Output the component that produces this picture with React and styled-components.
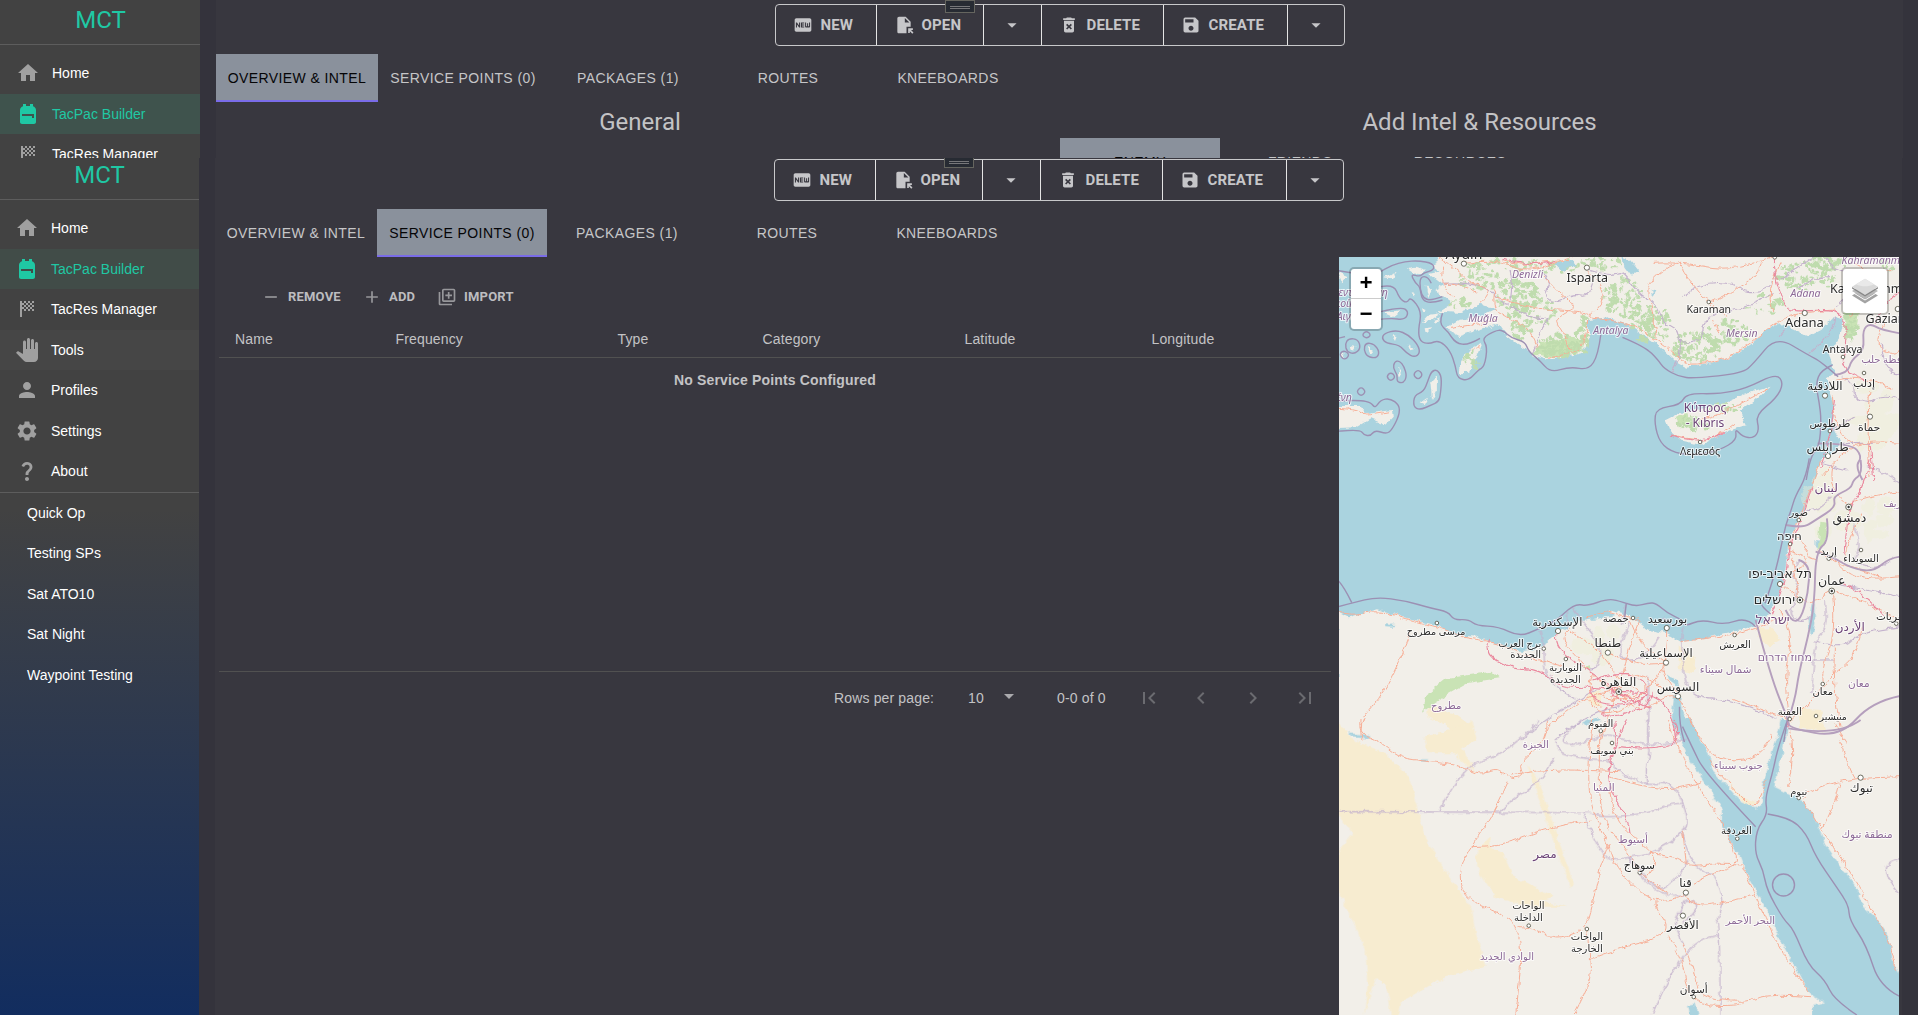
import React from "react";
import styled, { createGlobalStyle } from "styled-components";
import {
  MdHome, MdBackpack, MdSportsScore, MdPanTool, MdPerson, MdSettings, MdQuestionMark,
  MdFiberNew, MdFileOpen, MdArrowDropDown, MdDeleteForever, MdSave, MdRemove, MdAdd,
  MdOutlineLibraryAdd, MdFirstPage, MdChevronLeft, MdChevronRight, MdLastPage,
} from "react-icons/md";

const Global = createGlobalStyle`
  *, *::before, *::after { box-sizing: border-box; }
  html, body { margin: 0; padding: 0; background: #34333c; overflow: hidden; }
  body { font-family: "Liberation Sans", Arial, sans-serif; font-size: 14px; color: #c3c3c5; }
`;

const Page = styled.div`
  display: flex;
  flex-direction: column;
  height: 1015px;
  overflow: hidden;
`;

const Frame = styled.section`
  flex: ${(p) => (p.$height ? `0 0 ${p.$height}px` : "1 1 0")};
  min-height: 0;
  overflow: hidden;
`;

const Shell = styled.div`
  display: flex;
  gap: 16px;
  width: 1918px;
  height: ${(p) => p.$height}px;
  margin: ${(p) => (p.$nudged ? "-3px 0 0 -1px" : "0")};
`;

const Sidebar = styled.nav`
  flex: 0 0 200px;
  background: ${(p) => (p.$fade ? "linear-gradient(#424242 0, #424242 355px, #122d5f 100%)" : "#424242")};
`;

const Brand = styled.h1`
  margin: 0;
  height: 45px;
  padding: 6px 0 0 1px;
  border-bottom: 1px solid #5d5d5d;
  text-align: center;
  font: 400 24px/28px Roboto, sans-serif;
  color: #1fc8a4;
`;

const NavList = styled.ul`
  list-style: none;
  margin: 0;
  padding: ${(p) => (p.$top ? "8px 0 0" : "0")};
  border-bottom: ${(p) => (p.$ruled ? "1px solid #5d5d5d" : "0")};
`;

const NavItem = styled.li`
  display: flex;
  align-items: center;
  gap: 12px;
  height: 40.5px;
  padding: 0 16px 0 ${(p) => (p.$plain ? 28 : 16)}px;
  font-size: 14px;
  line-height: 20px;
  color: ${(p) => (p.$tone ? "#1fc8a4" : "#fff")};
  background: ${(p) => (p.$tone === "hover" ? "#3f534d" : p.$tone ? "#414c48" : p.$raised ? "#464646" : "transparent")};
  svg { width: 24px; height: 24px; flex: none; color: ${(p) => (p.$tone ? "#1fc8a4" : "#a0a0a0")}; }
`;

const Panel = styled.main`
  flex: 0 0 1687px;
  display: flex;
  flex-direction: column;
  background: #38373f;
`;

const ActionBar = styled.div`
  display: flex;
  justify-content: center;
  padding: 4px 0 8px;
`;

const ButtonGroup = styled.div`
  display: flex;
  width: 570px;
  height: 42px;
  border: 1px solid #c8c8ca;
  border-radius: 4px;
  position: relative;
`;

const GroupButton = styled.button`
  flex: 0 0 ${(p) => p.$width}px;
  display: flex;
  align-items: center;
  justify-content: ${(p) => (p.$caret ? "center" : "flex-start")};
  gap: 8px;
  padding: 0 0 ${(p) => (p.$caret ? "0 0" : "1px 17px")};
  border: 0;
  border-right: ${(p) => (p.$last ? "0" : "1px solid #e4e4e4")};
  background: none;
  color: #c6c6c9;
  font: 700 15px/26px Roboto, sans-serif;
  letter-spacing: 0.15px;
  white-space: nowrap;
  svg { width: ${(p) => (p.$caret ? 22 : 20)}px; height: ${(p) => (p.$caret ? 22 : 20)}px; flex: none; }
`;

const Grip = styled.div`
  position: absolute;
  left: 169px;
  top: -5px;
  width: 30px;
  height: 13px;
  padding: 5px 4px 0;
  background: #272b33;
  border: 1px solid #65655f;
  &::before {
    content: "";
    display: block;
    height: 3px;
    border: solid #77777a;
    border-width: 1px 0;
  }
`;

const TabBar = styled.div`
  display: flex;
  height: 48px;
`;

const Tab = styled.button`
  flex: 0 0 ${(p) => p.$width || 160}px;
  padding: ${(p) => (p.$active ? "2px 0 0" : "0")};
  height: 48px;
  border: 0;
  border-bottom: ${(p) => (p.$active ? "2px solid #7a6ce8" : "0")};
  background: ${(p) => (p.$active ? "#8a919c" : "transparent")};
  color: ${(p) => (p.$active ? "#050507" : "#c6c6c8")};
  font: 400 14px/24px "Liberation Sans", Arial, sans-serif;
  letter-spacing: 0.4px;
  white-space: nowrap;
`;

const Columns = styled.div`
  display: flex;
  justify-content: space-between;
`;

const HalfPane = styled.div`
  flex: 0 0 ${(p) => p.$width}px;
  display: flex;
  flex-direction: column;
`;

const PaneTitle = styled.h2`
  margin: 0;
  height: 36px;
  padding: 4px ${(p) => p.$right || 0}px 0 ${(p) => p.$left || 0}px;
  text-align: center;
  font: 400 24px/32px Roboto, sans-serif;
  color: #c3c3c5;
`;

const Workspace = styled.div`
  flex: 1;
  display: flex;
  gap: 8px;
  padding: 0 3px 0 4px;
`;

const TableArea = styled.div`
  flex: 0 0 1112px;
  display: flex;
  flex-direction: column;
`;

const TableActions = styled.div`
  display: flex;
  height: 62px;
  padding: 18px 0 0 42px;
  align-items: center;
`;

const TextButton = styled.button`
  flex: 0 0 ${(p) => p.$width}px;
  display: flex;
  align-items: center;
  gap: 7px;
  padding: 0;
  border: 0;
  background: none;
  color: #bdbdc0;
  font: 700 13px/22px Roboto, sans-serif;
  letter-spacing: 0.2px;
  svg { width: 20px; height: 20px; color: #97979b; }
`;

const HeadRow = styled.div`
  display: grid;
  grid-template-columns: 160.5px 222px 145px 202px 187px 1fr;
  height: 39px;
  padding: 11px 0 0 16px;
  border-bottom: 1px solid #515151;
  line-height: 18px;
  letter-spacing: 0.15px;
`;

const EmptyBody = styled.div`
  height: 314px;
  padding-top: 12px;
  border-bottom: 1px solid #515151;
  text-align: center;
  font-weight: 700;
  line-height: 20px;
  letter-spacing: 0.15px;
`;

const Pager = styled.div`
  display: flex;
  align-items: center;
  justify-content: flex-end;
  height: 52px;
  letter-spacing: 0.15px;
`;

const PagerText = styled.span`
  flex: 0 0 ${(p) => p.$width}px;
  white-space: nowrap;
`;

const PagerCaret = styled.span`
  flex: 0 0 60px;
  height: 28px;
  color: #aaaaad;
  svg { display: block; width: 24px; height: 24px; }
`;

const PagerStep = styled.span`
  flex: 0 0 52px;
  display: flex;
  justify-content: center;
  color: #6b6b70;
  svg { width: 24px; height: 24px; }
`;

const MapBox = styled.div`
  flex: 0 0 560px;
  height: 758px;
  position: relative;
  overflow: hidden;
  background: #aad3df;
`;

const MapCanvas = styled.svg`
  display: block;
  width: 560px;
  height: 758px;
`;

const MapControl = styled.div`
  position: absolute;
  top: 10px;
  ${(p) => p.$side}: 10px;
  display: flex;
  flex-direction: column;
  align-items: center;
  justify-content: center;
  width: ${(p) => p.$width}px;
  border: 2px solid rgba(0, 0, 0, 0.2);
  border-radius: 5px;
  background: #fff;
  background-clip: padding-box;
`;

const ZoomKey = styled.button`
  width: 30px;
  height: 30px;
  padding: 3px 0 0;
  border: 0;
  border-bottom: ${(p) => (p.$ruled ? "1px solid #ccc" : "0")};
  background: none;
  font: bold 22px/26px "Liberation Mono", monospace;
  color: #000;
`;

const LayersKey = styled.div`
  display: flex;
  align-items: center;
  justify-content: center;
  height: 44px;
`;

/* Map sheets: each sheet has its own survey grid and a vertical offset on the canvas. */
const SHEET = { n: -167, c: 203, s: 463 };
const toCanvas = (sheet, x, y) => [x * 0.375 - 9, y / 3 + SHEET[sheet]];

const LAND = {
  n: [
    "285,490 290,515 270,528 292,545 262,552 285,570 302,585 278,600 300,620 325,640 288,665 345,668 400,645 445,655 400,680 345,690 305,715 345,738 400,718 450,702 470,735 510,770 540,795 580,810 640,798 675,788 690,740 690,690 740,682 790,700 840,740 880,770 920,812 950,830 1010,820 1070,800 1120,765 1160,725 1200,700 1240,720 1275,740 1310,720 1345,680 1372,690 1360,740 1330,790 1345,850 1325,865 1330,900 1345,950 1340,1010 1365,1060 1330,1100 1305,1140 1300,1172 1525,1172 1525,490",
    "895,990 930,970 1040,945 1100,915 1175,890 1130,935 1095,965 1112,1005 1070,1020 1030,1042 990,1065 940,1052 905,1020",
    "407,758 375,775 350,810 343,850 370,848 392,800",
    "20,948 80,948 98,972 150,962 168,960 170,980 150,1004 110,985 70,1012 20,1014",
    "285,855 268,880 272,930 285,900", "238,940 262,920 250,945",
    "205,535 230,530 256,540 235,556", "140,565 178,548 165,568", "20,550 45,562 30,580",
    "145,670 190,664 170,682", "245,695 262,675 295,670 270,690", "275,690 294,682 280,702", "255,715 275,712 258,730",
    "168,735 180,738 176,750", "210,760 226,775 216,778", "54,765 68,768 60,782", "100,770 115,780 108,790",
    "182,830 192,850 186,860", "255,582 270,600 262,622", "30,785 40,800 32,805", "215,610 226,612 220,622", "245,655 258,660 250,670",
  ],
  c: [
    "20,455 50,472 125,448 200,472 290,498 330,525 390,530 440,550 500,572 540,570 580,545 612,515 660,482 700,475 750,452 800,470 850,500 900,520 935,545 1000,536 1050,520 1110,508 1150,490 1190,430 1205,380 1215,320 1222,250 1240,200 1265,150 1285,80 1300,30 1312,-6 1525,-6 1525,846 20,846",
  ],
};

const SAND = {
  c: ["20,800 60,845 20,845", "1140,505 1180,500 1200,540 1170,560 1140,530", "1250,745 1310,750 1320,815 1250,805", "930,560 975,590 970,640 930,630",
    "260,735 330,760 380,800 390,840 290,840 320,800 260,770", "690,700 720,690 725,740 690,730"],
  s: ["20,0 60,60 150,100 210,170 235,275 255,355 290,420 320,470 380,570 385,620 415,740 300,775 190,845 180,885 165,885 150,800 125,770 100,850 90,885 100,800 95,690 60,600 20,510 20,400 60,340 20,280",
    "250,50 330,30 380,0 390,60 350,85 390,160 330,100 260,100", "525,130 560,190 600,330 650,490 640,505 570,280",
    "385,410 425,350 430,385 460,400 490,470 600,530 560,540 630,560 530,560 440,530 400,460", "1050,170 1100,230 1140,250 1110,260"],
};

const WATER = {
  n: ["780,500 800,510 825,545 805,560 785,530", "858,600 868,605 862,618", "600,520 650,512 655,530 640,528 625,545 612,535"],
  c: ["918,705 912,760 920,800 940,846 985,846 955,790 938,750 934,705", "900,640 925,660 930,680 905,660", "1217,785 1198,815 1193,846 1212,846 1222,800",
    "1285,425 1277,480 1279,530 1286,520 1293,480 1292,430", "690,470 740,455 760,465 700,480", "830,490 880,500 900,520 850,510", "500,560 550,545 560,560 510,572", "1295,240 1303,242 1301,265 1295,260",
    "150,493 175,495 170,500 150,499", "675,790 715,775 720,785 690,798"],
  s: ["916,-4 962,-4 985,60 1010,100 1020,150 1060,200 1100,250 1135,265 1155,250 1155,200 1170,130 1195,40 1205,-4 1222,-4 1215,50 1200,130 1185,200 1220,220 1260,240 1290,290 1320,370 1350,420 1400,500 1430,570 1460,600 1490,650 1500,720 1522,765 1522,890 1285,890 1285,858 1320,850 1280,822 1240,740 1200,660 1170,580 1140,520 1110,460 1090,400 1070,370 1045,320 1045,270 1010,200 960,120 935,60",
    "955,855 975,850 985,890 960,890", "240,118 262,118 258,125 242,124", "50,40 105,45 100,55 60,52", "680,0 715,0 700,12"],
};

const WOODS = {
  n: ["560,760 640,740 680,745 670,785 600,805 540,790", "1378,650 1412,660 1400,740 1375,750", "922,980 950,972 965,1010 930,1000"],
  c: ["260,700 310,655 430,635 450,655 370,668 320,700 270,735 245,755", "1305,185 1328,190 1322,250 1300,270", "672,625 690,615 692,630"],
};

const ROADS = {
  n: [
    "290,500 340,540 370,580 440,600 400,640", "300,530 290,590 330,620", "360,520 440,505 520,545 600,520 650,500", "460,510 520,530 580,510 640,515",
    "440,620 520,650 600,660 690,665 700,685", "685,540 720,580 735,640 690,680", "700,685 780,690 860,740 930,800 950,828 1050,810 1110,770 1200,690 1260,665 1350,660",
    "860,520 930,515 1050,540 1130,520 1190,500", "930,515 880,545 845,590 860,660 870,740", "930,520 960,580 1010,640 1060,680", "1010,640 1080,600 1140,560 1150,520",
    "1020,690 1040,730", "640,780 630,740 605,700 610,680 660,650 600,600 570,560", "440,600 430,650 470,680 540,720 550,770", "1400,520 1450,560 1500,540", "1430,560 1420,650 1380,680",
    "1480,700 1450,760 1500,800 1520,780", "1350,870 1420,850 1500,900", "1340,920 1345,1040 1400,1060", "1440,900 1430,990 1440,1160", "1310,1160 1370,1080 1440,1050 1520,1060",
    "915,1035 990,1058 1040,1035 1080,1000", "985,990 1040,975 1100,935 1170,895", "24,955 70,958 90,975 110,975 160,965", "375,780 400,770",
    "1180,660 1160,600 1200,520", "305,580 350,575 390,610", "320,715 400,702 445,690", "580,805 640,792 680,770 690,690",
  ],
  c: [
    "20,455 60,468 125,450 200,475 300,505 360,535 440,545 500,575", "215,520 180,620 130,720 75,790 85,840",
    "640,515 690,545 740,600 770,660", "740,455 800,480 830,470 810,520 790,600 780,650", "680,475 740,452", "740,580 820,620 890,610", "800,480 820,540 860,580 895,608",
    "898,510 896,600 880,640 925,700", "640,500 610,530 660,590 700,650 760,690", "770,690 700,700 620,760 580,800 570,840", "770,690 740,770 722,840", "770,690 800,740 850,745 900,700 928,710",
    "690,720 710,765 790,750 850,690 830,660", "700,640 680,700 720,740", "500,580 620,620", "935,545 1080,525 1150,500 1210,470", "928,710 960,770 985,840", "1075,715 1150,750 1220,775",
    "1205,375 1250,420 1290,430 1340,390", "1222,255 1240,320 1250,420", "1200,450 1240,520 1210,650 1225,775", "1340,395 1350,520 1310,620 1315,670", "1350,300 1380,370 1520,350",
    "1335,390 1420,420 1520,480", "1300,270 1340,300 1380,320 1470,350", "1385,130 1420,110 1520,95", "1310,0 1280,90 1250,180 1225,250", "1340,20 1330,100 1385,135", "1420,160 1380,240 1370,300",
    "1345,560 1340,680 1360,800", "1420,500 1400,600 1340,640 1290,720 1230,780", "1240,230 1280,250 1260,290 1300,300", "1225,270 1260,280 1280,320 1210,345",
    "900,610 870,650 840,700 810,720 770,700", "780,640 860,640 890,690", "740,690 790,670 830,690 800,720 750,710", "720,700 760,740 800,700",
  ],
  s: [
    "80,0 75,40 130,60 180,110 240,122 345,135 400,165 450,145 480,180 520,170 500,130 580,60 580,0", "475,185 440,275 400,340 375,385 350,430 345,510 400,560 460,580 500,620 513,720 495,885",
    "375,380 460,380 580,320 700,300", "500,620 530,618 600,660 680,630 700,560 720,430 745,370", "685,630 692,700 697,790 650,885", "690,720 780,680 880,655 900,610 865,560 870,540",
    "700,0 690,100 690,250 740,370 760,440 830,525 900,550 950,520", "720,30 715,200 730,310 800,400 820,460 900,520", "745,200 750,290 830,370 860,400 870,440 840,480", "850,400 920,410 960,440 1010,430 1100,435",
    "770,155 680,150 550,150 480,165", "745,170 830,200 930,210 990,185", "950,520 960,560 1050,550 1130,525", "970,490 1040,450 1095,430 1060,350 1045,300 980,200 930,90 900,0",
    "1100,440 1150,570 1200,690 1280,820", "940,670 970,740 980,830 1110,850 1170,820 1280,830", "905,650 940,720 960,850 1070,860 1100,850",
    "1225,30 1245,90 1220,200", "960,0 1000,100 1080,130 1160,100 1180,40", "1010,120 1110,250 1140,265 1165,180", "1415,175 1300,190 1260,230", "1360,190 1350,250 1310,330", "1415,175 1520,170",
    "1360,60 1385,150 1400,175", "1345,10 1380,70", "1260,240 1310,330 1380,440 1440,560 1500,680 1510,750", "950,430 940,330",
  ],
};

const MOTORWAYS = {
  n: ["460,505 520,530 600,515", "1185,500 1185,560 1205,620 1220,665 1300,660 1365,665 1380,740 1360,850 1430,870", "1440,1060 1450,1170", "1345,930 1340,1030 1310,1130", "1520,600 1480,640 1450,700", "912,1035 950,1050 1010,1050 1050,1030"],
  c: ["425,540 412,578 480,625 560,628 620,685 700,680 770,695 850,745", "605,525 600,550 640,600 770,690", "700,660 770,630 840,660 850,720 770,740 690,720 700,680", "770,695 870,692 920,780 925,840",
    "1285,80 1260,180 1225,250 1212,380 1180,460", "1440,0 1420,90 1385,135 1375,240 1370,280", "1370,370 1430,405 1480,470", "745,680 760,730 820,720 840,690", "740,740 720,765 760,770 850,740 860,700", "1222,775 1225,805"],
  s: ["790,0 740,140 745,200 800,310 800,340", "770,80 860,90 940,60 920,0", "760,0 765,100 745,120", "1222,0 1222,25"],
};

const BORDERS = {
  n: [
    "300,580 360,575 430,600 450,630 480,650 490,590 480,540", "480,650 550,690 590,680 560,720 540,790", "560,540 590,570 570,620 600,640 650,610 690,620 700,580", "690,540 750,560 780,540 820,610 870,640 890,700 930,720 925,760 1000,750 990,690 1060,650",
    "940,620 990,575 1080,580 1110,610 1180,595 1190,540", "1060,665 1130,650 1180,610", "1200,570 1290,500", "1320,500 1340,540 1420,550 1390,610 1350,650", "1330,560 1290,560 1240,600",
    "935,750 935,810 912,846", "1370,860 1400,890 1395,920 1440,940 1480,910 1520,930", "1400,980 1340,1020", "1470,760 1480,860 1520,850", "1365,1060 1450,1060", "1310,1120 1380,1140", "1345,680 1348,725 1275,795", "1215,715 1195,740",
  ],
  c: [
    "560,515 572,560 572,665 655,718", "630,450 632,500", "650,445 680,495 720,550 720,630 690,630", "790,430 780,490", "940,500 935,600 960,715 1080,720 1190,775", "890,470 910,500", "800,480 780,530 770,600 830,600 870,550 880,530",
    "850,650 850,846", "510,840 570,775 710,690", "600,840 700,750 770,740", "1320,420 1330,500 1290,540 1285,700", "1290,545 1370,565 1400,520 1520,500", "1290,600 1345,600", "1395,190 1420,250 1390,310 1480,330 1500,290",
    "1250,300 1230,340 1255,400 1220,460 1260,490 1280,470", "1270,150 1300,160 1340,110", "1430,20 1470,30 1520,70", "1340,370 1520,410",
  ],
  s: [
    "20,275 700,276 700,285 740,292 850,280 910,250 942,250", "560,0 465,108 350,136 293,275", "670,0 603,66 655,78 740,40 770,55 860,82 955,58", "603,66 597,115 745,120", "597,115 570,180 480,240 453,275",
    "745,122 780,170 850,192 900,188 930,215 945,260 955,310 940,335 885,390 790,415 725,424 677,280", "848,0 845,80 857,90 838,155 850,192", "940,335 958,420 1010,465 1025,460 1050,540 1030,600 1040,615 1040,885", "958,420 900,510 860,500 800,410 790,415 880,535 950,525",
    "950,540 980,545 975,580 940,610", "1040,643 945,643 860,885", "950,540 915,600 930,640 945,680", "1520,415 1500,420 1480,440 1490,480 1520,520",
  ],
};

const NATIONAL = {
  n: ["1520,730 1470,720 1440,700 1420,720 1425,780 1390,810 1380,850 1345,855", "1300,1060 1390,1060 1420,1100 1400,1130 1420,1170"],
  c: ["1415,0 1420,40 1395,60 1390,85 1340,110 1350,140 1295,180 1260,205 1215,195", "1325,175 1332,240 1295,275 1292,430 1275,530 1250,640 1240,720 1222,780", "1135,480 1175,650 1222,780 1225,805 1360,832 1445,725 1520,708", "1295,275 1340,290 1390,325 1450,335 1490,295 1520,290", "1250,300 1280,310 1275,400 1255,480 1230,485 1215,450"],
  s: ["1222,25 1355,50 1415,0"],
};

const SEA_LIMITS = {
  n: [
    "-10,535 60,550 110,555 130,548 165,525 200,515 235,512 275,520 278,540 250,548 240,560 215,552 228,580 240,590 245,630 270,640 300,630",
    "135,590 170,582 185,625 205,640 215,620 245,665 235,720 240,755 265,762 290,750 320,780 335,830 340,865 370,872 395,840 412,830 420,770 405,745 440,722 460,720 485,745 520,755 530,785 560,812 588,848 640,830 690,840 715,795 722,735",
    "780,742 840,770 875,810 890,835 930,860 970,865 1100,850 1130,820 1190,738 1275,795 1310,815 1355,860",
    "270,580 262,560 240,560 240,600 250,625 270,632 300,620", "300,670 290,700 315,725 335,760 370,765 400,745", "120,690 160,684 200,690 210,665 190,650 135,665",
    "1340,825 1310,840 1295,880 1305,940 1310,990 1305,1070 1280,1100 1270,1170",
    "40,740 10,750 -10,745",
  ],
  c: [
    "20,360 35,375 58,428", "-10,450 60,428 125,411 200,422 270,445 315,455 330,480 370,478 390,497 450,500 505,530 555,508 605,480 635,448 660,432 685,438 740,417 770,422 815,440 850,428 870,430 900,460 940,480 945,500 990,478 1050,495 1112,472 1135,500",
    "1278,-5 1270,50 1240,110 1230,150 1215,195 1205,250 1185,350 1160,430", "1150,430 1150,440 1175,462", "790,430 785,480", "932,740 930,790 945,846", "1218,790 1210,846",
  ],
  s: ["940,20 965,80 1000,160 1135,320", "1220,0 1195,80 1180,160 1160,235 1167,282 1137,330 1133,400 1155,450 1165,510 1210,600 1235,625 1275,735 1320,780 1345,840 1405,885", "1167,282 1225,292 1270,340 1295,410 1350,500 1383,555 1385,600 1430,675 1468,805 1530,835"],
};

const SEA_RINGS = {
  n: [
    "935,945 950,910 1040,912 1110,895 1190,850 1210,880 1190,925 1135,975 1145,1020 1130,1045 1100,1040 1080,1015 1085,1050 1040,1080 980,1095 920,1090 880,1060 865,1000 870,955",
    "-20,935 80,930 110,938 120,955 135,930 160,925 185,945 185,975 165,1020 150,1032 120,1020 108,1038 90,1035 80,1018 -20,1028",
    "285,838 298,860 295,910 290,935 270,945 240,960 222,950 225,915 250,905 262,870 270,845", "185,812 198,830 205,860 195,880 178,875 180,855 168,835 172,815",
    "145,730 178,720 210,735 235,765 240,790 225,802 205,790 185,765 150,760 138,745", "95,758 118,762 132,785 125,805 100,800 90,780", "50,745 75,748 82,775 65,792 45,785 40,762",
    "150,860 162,846 175,860 162,874", "221,854 235,838 248,854 235,870", "70,905 83,890 96,905 83,919", "24,793 38,780 53,795 38,811", "85,735 97,722 110,735 97,746",
  ],
};

const LABELS = [
  ["n", 357, 506, "Aydın", 14, "city"], ["n", 686, 577, "Isparta", 12.5, "city"], ["n", 527, 563, "Denizli", 10.5, "area"], ["n", 408, 695, "Muğla", 10.5, "area"],
  ["n", 749, 732, "Antalya", 10.5, "area"], ["n", 1010, 669, "Karaman", 10.5, "city"], ["n", 1098, 740, "Mersin", 10.5, "area"], ["n", 1268, 620, "Adana", 10.5, "area"],
  ["n", 1265, 711, "Adana", 13, "city"], ["n", 1450, 522, "Kahramanma", 10.5, "area"], ["n", 1430, 609, "Kahramanm", 12.5, "city"], ["n", 1497, 699, "Gaziante", 12.5, "city"],
  ["n", 1367, 790, "Antakya", 10.5, "city"], ["n", 1490, 820, "محافظة حلب", 10, "area"], ["n", 1320, 900, "اللاذقية", 12, "city"], ["n", 1424, 892, "إدلب", 11, "city"],
  ["n", 1333, 1010, "طرطوس", 10.5, "city"], ["n", 1438, 1022, "حماة", 11, "city"], ["n", 1327, 1082, "طرابلس", 12, "city"], ["n", 1000, 967, "Κύπρος", 12, "land"],
  ["n", 1000, 1012, "- Kıbrıs", 12, "land"], ["n", 987, 1094, "Λεμεσός", 10.5, "city"], ["n", 58, 618, "Αποκεντρωμένη", 10.5, "area"], ["n", 58, 652, "Διοίκηση", 10.5, "area"],
  ["n", 64, 690, "Αιγαίου", 10.5, "area"], ["n", -38, 934, "Αποκεντρωμένη", 10.5, "area"],
  ["c", 1323, 95, "لبنان", 12, "land"], ["c", 1385, 187, "دمشق", 12.5, "city"], ["c", 1250, 167, "صور", 10, "city"], ["c", 1225, 240, "חיפה", 11.5, "city"],
  ["c", 1330, 285, "إربد", 10.5, "city"], ["c", 1416, 305, "السويداء", 10, "city"], ["c", 1500, 140, "ريف", 10, "area"], ["c", 1200, 355, "תל אביב-יפו", 12.8, "city"],
  ["c", 1338, 375, "عمان", 12.5, "city"], ["c", 1185, 431, "ירושלים", 12.8, "city"], ["c", 1180, 492, "ישראל", 12.5, "land"], ["c", 1386, 512, "الأردن", 12, "land"],
  ["c", 1500, 480, "القريات", 10.5, "city"], ["c", 1213, 602, "מחוז הדרום", 11, "area"], ["c", 1080, 564, "العريش", 10, "city"], ["c", 1055, 640, "شمال سيناء", 10.5, "area"],
  ["c", 1410, 681, "معان", 10.5, "area"], ["c", 1314, 706, "معان", 10, "city"], ["c", 1226, 765, "العقبة", 10, "city"], ["c", 1342, 780, "منيشير", 9.5, "city"],
  ["c", 283, 526, "مرسى مطروح", 9.7, "city"], ["c", 310, 747, "مطروح", 10, "area"], ["c", 606, 498, "الإسكندرية", 11.5, "city"], ["c", 506, 560, "برج العرب", 10, "city"],
  ["c", 522, 595, "الجديدة", 10, "city"], ["c", 762, 487, "جمصة", 10, "city"], ["c", 900, 488, "بورسعيد", 11.5, "city"], ["c", 741, 562, "طنطا", 12, "city"],
  ["c", 628, 634, "النوبارية", 10, "city"], ["c", 628, 668, "الجديدة", 10, "city"], ["c", 896, 592, "الإسماعيلية", 11.5, "city"], ["c", 769, 678, "القاهرة", 12, "city"],
  ["c", 928, 692, "السويس", 12, "city"], ["c", 722, 800, "الفيوم", 10, "city"],
  ["s", 549, 83, "الجيزة", 10, "area"], ["s", 752, 102, "بني سويف", 10, "city"], ["s", 730, 214, "المنيا", 10.5, "area"], ["s", 808, 370, "أسيوط", 10.5, "area"],
  ["s", 573, 415, "مصر", 12, "land"], ["s", 825, 446, "سوهاج", 11, "city"], ["s", 948, 500, "قنا", 11.5, "city"], ["s", 529, 568, "الواحات", 10, "city"],
  ["s", 529, 604, "الداخلة", 10, "city"], ["s", 685, 660, "الواحات", 10, "city"], ["s", 685, 696, "الخارجة", 10, "city"], ["s", 472, 720, "الوادي الجديد", 10, "area"],
  ["s", 941, 628, "الأقصر", 11.5, "city"], ["s", 1121, 611, "البحر الأحمر", 10, "area"], ["s", 970, 818, "أسوان", 10.5, "city"], ["s", 1084, 343, "الغردقة", 10, "city"],
  ["s", 1089, 147, "جنوب سيناء", 10, "area"], ["s", 1250, 224, "نيوم", 10, "city"], ["s", 1417, 216, "تبوك", 12, "city"], ["s", 1432, 355, "منطقة تبوك", 10.5, "area"],
];

const TOWNS = [
  ["n", 357, 521], ["n", 685, 533], ["n", 1266, 669], ["n", 1320, 917], ["n", 1440, 980], ["n", 1328, 1098], ["n", 1514, 657],
  ["c", 1200, 372], ["c", 608, 513], ["c", 898, 504], ["c", 741, 578], ["c", 896, 608], ["c", 928, 709],
  ["s", 1415, 173], ["s", 949, 518], ["s", 941, 587],
];
const VILLAGES = [
  ["n", 1010, 636], ["n", 1186, 502], ["n", 1368, 801], ["n", 1424, 849], ["n", 1333, 1023], ["n", 987, 1056],
  ["c", 285, 489], ["c", 808, 474], ["c", 570, 566], ["c", 629, 597], ["c", 1079, 525], ["c", 1314, 672], ["c", 1226, 777], ["c", 1296, 768], ["c", 1227, 252], ["c", 1250, 180], ["c", 1330, 296], ["c", 1416, 270], ["c", 1510, 491],
  ["s", 722, 33], ["s", 752, 69], ["s", 826, 458], ["s", 530, 617], ["s", 685, 627], ["s", 970, 831], ["s", 1086, 356], ["s", 1250, 234],
];
const CAPITALS = [["c", 1383, 141], ["c", 1338, 393], ["c", 1253, 420], ["c", 770, 695]];

/* Forest speckle: [sheet, centre x, centre y, radius x, radius y, count] */
const THICKETS = [
  ["n", 500, 620, 60, 60, 90], ["n", 450, 525, 90, 20, 40], ["n", 610, 770, 60, 35, 80], ["n", 780, 620, 50, 60, 70], ["n", 850, 700, 60, 60, 80],
  ["n", 980, 770, 70, 45, 90], ["n", 1060, 730, 60, 40, 50], ["n", 400, 570, 60, 30, 30], ["n", 590, 530, 70, 25, 30], ["n", 675, 730, 18, 60, 30],
  ["n", 1270, 560, 80, 45, 70], ["n", 1330, 520, 60, 20, 40], ["n", 1390, 690, 18, 60, 40], ["n", 970, 1000, 45, 22, 36], ["n", 1060, 950, 50, 12, 14],
  ["n", 375, 810, 20, 30, 14], ["n", 510, 720, 30, 30, 30], ["n", 720, 520, 60, 20, 24], ["n", 350, 640, 40, 14, 14], ["n", 550, 660, 60, 50, 30],
  ["n", 1160, 640, 50, 30, 20], ["n", 1480, 530, 30, 20, 10],
];
const PALE = [
  ["n", 1440, 1000, 60, 140, 14], ["c", 1440, 180, 60, 60, 8], ["c", 1310, 130, 20, 90, 8], ["c", 720, 560, 60, 60, 6],
];

const scatter = (areas, seed, grow) => {
  let s = seed;
  const rnd = () => ((s = (s * 16807) % 2147483647) / 2147483647);
  const out = [];
  areas.forEach(([sheet, cx, cy, rx, ry, n]) => {
    for (let i = 0; i < n; i++) {
      const a = rnd() * Math.PI * 2;
      const r = Math.sqrt(rnd());
      const [x, y] = toCanvas(sheet, cx + Math.cos(a) * r * rx, cy + Math.sin(a) * r * ry);
      out.push({ x, y, rx: (0.8 + rnd() * 2.2) * grow, ry: (0.7 + rnd() * 1.9) * grow });
    }
  });
  return out;
};
const FOREST = scatter(THICKETS, 77, 1);
const MEADOW = scatter(PALE, 19, 5);

/* Rounds a point list into a curve through the midpoints of its segments. */
const curve = (points, closed) => {
  const p = points.split(" ").map((s) => s.split(",").map(Number));
  const mid = (a, b) => `${(a[0] + b[0]) / 2} ${(a[1] + b[1]) / 2}`;
  if (closed) {
    return `M${mid(p[p.length - 1], p[0])}` + p.map((q, i) => `Q${q[0]} ${q[1]} ${mid(q, p[(i + 1) % p.length])}`).join("") + "Z";
  }
  const body = p.slice(1, -1).map((q, i) => `Q${q[0]} ${q[1]} ${i === p.length - 3 ? p[p.length - 1].join(" ") : mid(q, p[i + 2])}`).join("");
  return `M${p[0].join(" ")}` + (body || `L${p[p.length - 1].join(" ")}`);
};

const Lines = ({ data, closed, ...look }) =>
  Object.keys(data).map((sheet) => (
    <g key={sheet} transform={`translate(-9 ${SHEET[sheet]}) scale(.375 .33333)`} fill="none" strokeLinejoin="round" {...look}>
      {data[sheet].map((p) => <path key={p} d={curve(p, closed)} vectorEffect="non-scaling-stroke" />)}
    </g>
  ));

const Shapes = ({ data, fill }) =>
  Object.keys(data).map((sheet) => (
    <g key={sheet} transform={`translate(-9 ${SHEET[sheet]}) scale(.375 .33333)`} fill={fill}>
      {data[sheet].map((p) => <polygon key={p} points={p} />)}
    </g>
  ));

const INK = { city: "#2b2b2b", area: "#8d6a98", land: "#6c4377" };

const MapLabel = styled.text`
  font-family: "Noto Sans", "DejaVu Sans", sans-serif;
  font-size: ${(p) => p.$size}px;
  font-style: ${(p) => (p.$slanted ? "italic" : "normal")};
  text-anchor: middle;
  fill: ${(p) => INK[p.$kind]};
  stroke: rgba(255, 255, 255, 0.7);
  stroke-width: 2px;
  stroke-linejoin: round;
  paint-order: stroke;
`;

const Dots = ({ data, r }) =>
  data.map(([sheet, x, y]) => {
    const [cx, cy] = toCanvas(sheet, x, y);
    return <circle key={`${x}-${y}`} cx={cx} cy={cy} r={r} fill="#fff" stroke="#5b5b4e" strokeWidth=".9" />;
  });

const MapDrawing = () => (
  <MapCanvas viewBox="0 0 560 758">
    <defs>
      <filter id="coast" x="0" y="0" width="100%" height="100%" filterUnits="userSpaceOnUse" colorInterpolationFilters="sRGB">
        <feTurbulence type="fractalNoise" baseFrequency=".13" numOctaves="3" seed="4" />
        <feDisplacementMap in="SourceGraphic" scale="6" xChannelSelector="R" yChannelSelector="G" />
      </filter>
    </defs>
    <rect width="560" height="758" fill="#aad3df" />
    <g filter="url(#coast)">
      <rect x="-10" y="480" width="590" height="300" fill="#f2efe9" />
      <Shapes data={LAND} fill="#f2efe9" />
      <g opacity=".4">{MEADOW.map((m, i) => <ellipse key={i} cx={m.x} cy={m.y} rx={m.rx} ry={m.ry} fill="#eef0d5" />)}</g>
      <Shapes data={SAND} fill="#f7ecd0" />
      <Shapes data={WOODS} fill="#c9e3b5" />
      {FOREST.map((f, i) => <ellipse key={i} cx={f.x} cy={f.y} rx={f.rx} ry={f.ry} fill="#bfdcae" />)}
      <Shapes data={WATER} fill="#aad3df" />
    </g>
    <g filter="url(#coast)">
      <Lines data={BORDERS} stroke="#c3b1cc" strokeWidth="1.1" />
      <Lines data={ROADS} stroke="#f7ae96" strokeWidth="1" />
      <Lines data={MOTORWAYS} stroke="#ea879d" strokeWidth="1.1" />
    </g>
    <Lines data={NATIONAL} stroke="#b59fbd" strokeWidth="1.9" />
    <Lines data={SEA_LIMITS} stroke="#9c90b3" strokeWidth="1.4" />
    <Lines data={SEA_RINGS} closed stroke="#9c90b3" strokeWidth="1.4" />
    <circle cx="444.500" cy="628" r="11" fill="none" stroke="#9c90b3" strokeWidth="1.4" />
    <Dots data={TOWNS} r={2.6} />
    <Dots data={VILLAGES} r={1.8} />
    <Dots data={CAPITALS} r={2.9} />
    {CAPITALS.map(([sheet, x, y]) => {
      const [cx, cy] = toCanvas(sheet, x, y);
      return <circle key={x} cx={cx} cy={cy} r="1.2" fill="#333" />;
    })}
    {LABELS.map(([sheet, x, y, text, size, kind]) => {
      const [px, py] = toCanvas(sheet, x, y);
      return (
        <MapLabel key={`${x}-${y}`} x={px} y={py} $size={size} $kind={kind} $slanted={kind === "area" && /[a-zα-ω]/i.test(text)}>
          {text}
        </MapLabel>
      );
    })}
  </MapCanvas>
);

const LayersIcon = () => (
  <svg width="26" height="26" viewBox="0 0 26 26">
    <path d="M0 17.500 13 9.500 26 17.500 13 25.500z" fill="#a3a3a3" />
    <path d="M0 13.500 13 21.500 26 13.500 V14.500 L13 22.500 0 14.500z" fill="#fff" />
    <path d="M0 13 13 5 26 13 13 21z" fill="#b9b9b9" />
    <path d="M0 9 13 17 26 9 V10.500 L13 18.500 0 10.500z" fill="#878787" />
    <path d="M0 8.800 13 .8 26 8.800 13 16.800z" fill="#d9d9d9" />
    <path d="M4 6.300 13 .8 22 6.300 C16 9 10 9 4 6.300z" fill="#e9e9e9" />
  </svg>
);

const NAV = [
  ["Home", MdHome], ["TacPac Builder", MdBackpack], ["TacRes Manager", MdSportsScore], ["Tools", MdPanTool],
  ["Profiles", MdPerson], ["Settings", MdSettings], ["About", MdQuestionMark],
];
const SAVED = ["Quick Op", "Testing SPs", "Sat ATO10", "Sat Night", "Waypoint Testing"];
const TABS = [["OVERVIEW & INTEL", 162], ["SERVICE POINTS (0)", 170], ["PACKAGES (1)"], ["ROUTES"], ["KNEEBOARDS"]];

const SideNav = ({ fade, tone, raised }) => (
  <Sidebar $fade={fade}>
    <Brand>MCT</Brand>
    <NavList $top $ruled>
      {NAV.map(([label, Icon]) => (
        <NavItem key={label} $tone={label === "TacPac Builder" ? tone : undefined} $raised={label === raised}>
          <Icon />
          {label}
        </NavItem>
      ))}
    </NavList>
    <NavList>
      {SAVED.map((label) => <NavItem key={label} $plain>{label}</NavItem>)}
    </NavList>
  </Sidebar>
);

const Actions = () => (
  <ActionBar>
    <ButtonGroup>
      <GroupButton $width={101}><MdFiberNew />NEW</GroupButton>
      <GroupButton $width={107}><MdFileOpen />OPEN</GroupButton>
      <GroupButton $width={58} $caret><MdArrowDropDown /></GroupButton>
      <GroupButton $width={122}><MdDeleteForever />DELETE</GroupButton>
      <GroupButton $width={124}><MdSave />CREATE</GroupButton>
      <GroupButton $width={56} $caret $last><MdArrowDropDown /></GroupButton>
      <Grip />
    </ButtonGroup>
  </ActionBar>
);

const MainTabs = ({ active }) => (
  <TabBar>
    {TABS.map(([label, width], i) => <Tab key={label} $width={width} $active={i === active}>{label}</Tab>)}
  </TabBar>
);

const Overview = () => (
  <Frame $height={158}>
    <Shell $height={720}>
      <SideNav tone="hover" />
      <Panel>
        <Actions />
        <MainTabs active={0} />
        <Columns>
          <HalfPane $width={844}><PaneTitle $left={4}>General</PaneTitle></HalfPane>
          <HalfPane $width={843}>
            <PaneTitle $right={4}>Add Intel &amp; Resources</PaneTitle>
            <TabBar>
              <Tab $active>ENEMY</Tab>
              <Tab>FRIENDS</Tab>
              <Tab>RESOURCES</Tab>
            </TabBar>
          </HalfPane>
        </Columns>
      </Panel>
    </Shell>
  </Frame>
);

const ServicePoints = () => (
  <Frame>
    <Shell $height={860} $nudged>
      <SideNav fade tone="selected" raised="Tools" />
      <Panel>
        <Actions />
        <MainTabs active={1} />
        <Workspace>
          <TableArea>
            <TableActions>
              <TextButton $width={101}><MdRemove />REMOVE</TextButton>
              <TextButton $width={75}><MdAdd />ADD</TextButton>
              <TextButton $width={90}><MdOutlineLibraryAdd />IMPORT</TextButton>
            </TableActions>
            <HeadRow>
              <span>Name</span><span>Frequency</span><span>Type</span><span>Category</span><span>Latitude</span><span>Longitude</span>
            </HeadRow>
            <EmptyBody>No Service Points Configured</EmptyBody>
            <Pager>
              <PagerText $width={134}>Rows per page:</PagerText>
              <PagerText $width={29}>10</PagerText>
              <PagerCaret><MdArrowDropDown /></PagerCaret>
              <PagerText $width={66}>0-0 of 0</PagerText>
              <PagerStep><MdFirstPage /></PagerStep>
              <PagerStep><MdChevronLeft /></PagerStep>
              <PagerStep><MdChevronRight /></PagerStep>
              <PagerStep><MdLastPage /></PagerStep>
            </Pager>
          </TableArea>
          <MapBox>
            <MapDrawing />
            <MapControl $side="left" $width={34}>
              <ZoomKey $ruled>+</ZoomKey>
              <ZoomKey>−</ZoomKey>
            </MapControl>
            <MapControl $side="right" $width={48}>
              <LayersKey><LayersIcon /></LayersKey>
            </MapControl>
          </MapBox>
        </Workspace>
      </Panel>
    </Shell>
  </Frame>
);

export default function App() {
  return (
    <Page>
      <Global />
      <Overview />
      <ServicePoints />
    </Page>
  );
}
